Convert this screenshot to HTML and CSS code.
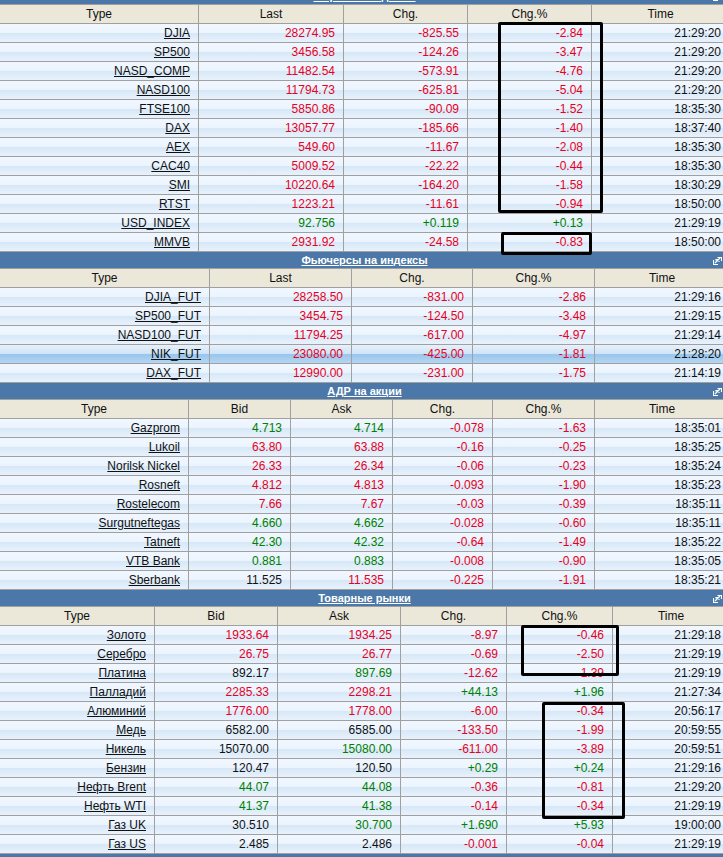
FILE: index.html
```html
<!DOCTYPE html>
<html lang="ru">
<head>
<meta charset="utf-8">
<title>Markets</title>
<link rel="stylesheet" href="styles.css">
</head>
<body>
<div class="board">
  <section class="block">
    <h2 class="band"><a href="#">Мировые индексы</a><svg class="expand" viewBox="0 0 9 8"><path d="M0.5 3v4.5H5M2 6l5-5M4.5 0.5H8.5V4M5 2.500h-2v1M6 5v-1" fill="none" stroke="#fff" stroke-width="1.200"/></svg></h2>
    <table class="grid g1">
      <colgroup><col><col><col><col><col><col></colgroup>
      <thead><tr><th>Type</th><th>Last</th><th>Chg.</th><th>Chg.%</th><th>Time</th></tr></thead>
      <tbody>
        <tr><td><a href="#">DJIA</a></td><td class="r">28274.95</td><td class="r">-825.55</td><td class="r">-2.84</td><td>21:29:20</td></tr>
        <tr><td><a href="#">SP500</a></td><td class="r">3456.58</td><td class="r">-124.26</td><td class="r">-3.47</td><td>21:29:20</td></tr>
        <tr><td><a href="#">NASD_COMP</a></td><td class="r">11482.54</td><td class="r">-573.91</td><td class="r">-4.76</td><td>21:29:20</td></tr>
        <tr><td><a href="#">NASD100</a></td><td class="r">11794.73</td><td class="r">-625.81</td><td class="r">-5.04</td><td>21:29:20</td></tr>
        <tr><td><a href="#">FTSE100</a></td><td class="r">5850.86</td><td class="r">-90.09</td><td class="r">-1.52</td><td>18:35:30</td></tr>
        <tr><td><a href="#">DAX</a></td><td class="r">13057.77</td><td class="r">-185.66</td><td class="r">-1.40</td><td>18:37:40</td></tr>
        <tr><td><a href="#">AEX</a></td><td class="r">549.60</td><td class="r">-11.67</td><td class="r">-2.08</td><td>18:35:30</td></tr>
        <tr><td><a href="#">CAC40</a></td><td class="r">5009.52</td><td class="r">-22.22</td><td class="r">-0.44</td><td>18:35:30</td></tr>
        <tr><td><a href="#">SMI</a></td><td class="r">10220.64</td><td class="r">-164.20</td><td class="r">-1.58</td><td>18:30:29</td></tr>
        <tr><td><a href="#">RTST</a></td><td class="r">1223.21</td><td class="r">-11.61</td><td class="r">-0.94</td><td>18:50:00</td></tr>
        <tr><td><a href="#">USD_INDEX</a></td><td class="g">92.756</td><td class="g">+0.119</td><td class="g">+0.13</td><td>21:29:19</td></tr>
        <tr><td><a href="#">MMVB</a></td><td class="r">2931.92</td><td class="r">-24.58</td><td class="r">-0.83</td><td>18:50:00</td></tr>
      </tbody>
    </table>
  </section>
  <section class="block">
    <h2 class="band"><a href="#">Фьючерсы на индексы</a><svg class="expand" viewBox="0 0 9 8"><path d="M0.5 3v4.5H5M2 6l5-5M4.5 0.5H8.5V4M5 2.500h-2v1M6 5v-1" fill="none" stroke="#fff" stroke-width="1.200"/></svg></h2>
    <table class="grid g2">
      <colgroup><col><col><col><col><col><col></colgroup>
      <thead><tr><th>Type</th><th>Last</th><th>Chg.</th><th>Chg.%</th><th>Time</th></tr></thead>
      <tbody>
        <tr><td><a href="#">DJIA_FUT</a></td><td class="r">28258.50</td><td class="r">-831.00</td><td class="r">-2.86</td><td>21:29:16</td></tr>
        <tr><td><a href="#">SP500_FUT</a></td><td class="r">3454.75</td><td class="r">-124.50</td><td class="r">-3.48</td><td>21:29:15</td></tr>
        <tr><td><a href="#">NASD100_FUT</a></td><td class="r">11794.25</td><td class="r">-617.00</td><td class="r">-4.97</td><td>21:29:14</td></tr>
        <tr class="hover"><td><a href="#">NIK_FUT</a></td><td class="r">23080.00</td><td class="r">-425.00</td><td class="r">-1.81</td><td>21:28:20</td></tr>
        <tr><td><a href="#">DAX_FUT</a></td><td class="r">12990.00</td><td class="r">-231.00</td><td class="r">-1.75</td><td>21:14:19</td></tr>
      </tbody>
    </table>
  </section>
  <section class="block">
    <h2 class="band"><a href="#">АДР на акции</a><svg class="expand" viewBox="0 0 9 8"><path d="M0.5 3v4.5H5M2 6l5-5M4.5 0.5H8.5V4M5 2.500h-2v1M6 5v-1" fill="none" stroke="#fff" stroke-width="1.200"/></svg></h2>
    <table class="grid g3">
      <colgroup><col><col><col><col><col><col></colgroup>
      <thead><tr><th>Type</th><th>Bid</th><th>Ask</th><th>Chg.</th><th>Chg.%</th><th>Time</th></tr></thead>
      <tbody>
        <tr><td><a href="#">Gazprom</a></td><td class="g">4.713</td><td class="g">4.714</td><td class="r">-0.078</td><td class="r">-1.63</td><td>18:35:01</td></tr>
        <tr><td><a href="#">Lukoil</a></td><td class="r">63.80</td><td class="r">63.88</td><td class="r">-0.16</td><td class="r">-0.25</td><td>18:35:25</td></tr>
        <tr><td><a href="#">Norilsk Nickel</a></td><td class="r">26.33</td><td class="r">26.34</td><td class="r">-0.06</td><td class="r">-0.23</td><td>18:35:24</td></tr>
        <tr><td><a href="#">Rosneft</a></td><td class="r">4.812</td><td class="r">4.813</td><td class="r">-0.093</td><td class="r">-1.90</td><td>18:35:23</td></tr>
        <tr><td><a href="#">Rostelecom</a></td><td class="r">7.66</td><td class="r">7.67</td><td class="r">-0.03</td><td class="r">-0.39</td><td>18:35:11</td></tr>
        <tr><td><a href="#">Surgutneftegas</a></td><td class="g">4.660</td><td class="g">4.662</td><td class="r">-0.028</td><td class="r">-0.60</td><td>18:35:11</td></tr>
        <tr><td><a href="#">Tatneft</a></td><td class="g">42.30</td><td class="g">42.32</td><td class="r">-0.64</td><td class="r">-1.49</td><td>18:35:22</td></tr>
        <tr><td><a href="#">VTB Bank</a></td><td class="g">0.881</td><td class="g">0.883</td><td class="r">-0.008</td><td class="r">-0.90</td><td>18:35:05</td></tr>
        <tr><td><a href="#">Sberbank</a></td><td>11.525</td><td class="r">11.535</td><td class="r">-0.225</td><td class="r">-1.91</td><td>18:35:21</td></tr>
      </tbody>
    </table>
  </section>
  <section class="block">
    <h2 class="band"><a href="#">Товарные рынки</a><svg class="expand" viewBox="0 0 9 8"><path d="M0.5 3v4.5H5M2 6l5-5M4.5 0.5H8.5V4M5 2.500h-2v1M6 5v-1" fill="none" stroke="#fff" stroke-width="1.200"/></svg></h2>
    <table class="grid g4">
      <colgroup><col><col><col><col><col><col></colgroup>
      <thead><tr><th>Type</th><th>Bid</th><th>Ask</th><th>Chg.</th><th>Chg.%</th><th>Time</th></tr></thead>
      <tbody>
        <tr><td><a href="#">Золото</a></td><td class="r">1933.64</td><td class="r">1934.25</td><td class="r">-8.97</td><td class="r">-0.46</td><td>21:29:18</td></tr>
        <tr><td><a href="#">Серебро</a></td><td class="r">26.75</td><td class="r">26.77</td><td class="r">-0.69</td><td class="r">-2.50</td><td>21:29:19</td></tr>
        <tr><td><a href="#">Платина</a></td><td>892.17</td><td class="g">897.69</td><td class="r">-12.62</td><td class="r">-1.39</td><td>21:29:19</td></tr>
        <tr><td><a href="#">Палладий</a></td><td class="r">2285.33</td><td class="r">2298.21</td><td class="g">+44.13</td><td class="g">+1.96</td><td>21:27:34</td></tr>
        <tr><td><a href="#">Алюминий</a></td><td class="r">1776.00</td><td class="r">1778.00</td><td class="r">-6.00</td><td class="r">-0.34</td><td>20:56:17</td></tr>
        <tr><td><a href="#">Медь</a></td><td>6582.00</td><td>6585.00</td><td class="r">-133.50</td><td class="r">-1.99</td><td>20:59:55</td></tr>
        <tr><td><a href="#">Никель</a></td><td>15070.00</td><td class="g">15080.00</td><td class="r">-611.00</td><td class="r">-3.89</td><td>20:59:51</td></tr>
        <tr><td><a href="#">Бензин</a></td><td>120.47</td><td>120.50</td><td class="g">+0.29</td><td class="g">+0.24</td><td>21:29:16</td></tr>
        <tr><td><a href="#">Нефть Brent</a></td><td class="g">44.07</td><td class="g">44.08</td><td class="r">-0.36</td><td class="r">-0.81</td><td>21:29:20</td></tr>
        <tr><td><a href="#">Нефть WTI</a></td><td class="g">41.37</td><td class="g">41.38</td><td class="r">-0.14</td><td class="r">-0.34</td><td>21:29:19</td></tr>
        <tr><td><a href="#">Газ UK</a></td><td>30.510</td><td class="g">30.700</td><td class="g">+1.690</td><td class="g">+5.93</td><td>19:00:00</td></tr>
        <tr><td><a href="#">Газ US</a></td><td>2.485</td><td>2.486</td><td class="r">-0.001</td><td class="r">-0.04</td><td>21:29:19</td></tr>
      </tbody>
    </table>
  </section>
  <div class="band"></div>
  <div class="mark m1"></div>
  <div class="mark m2"></div>
  <div class="mark m3"></div>
  <div class="mark m4"></div>
</div>
</body>
</html>
```
FILE: styles.css
```css
html, body {
  margin: 0;
  padding: 0;
  height: 857px;
  overflow: hidden;
  background: #fff;
}
.board {
  position: relative;
  width: 729px;
  margin-top: -12px;
  font-family: "Liberation Sans", Arial, sans-serif;
  font-size: 12px;
  color: #111;
}
.band {
  position: relative;
  height: 16px;
  margin: 0;
  background: #4b78a8;
  font-size: 11px;
  line-height: 17px;
  font-weight: bold;
  text-align: center;
}
.band a {
  color: #fff;
}
.expand {
  position: absolute;
  right: 7px;
  top: 5px;
  width: 9px;
  height: 8px;
}
.grid {
  width: 729px;
  table-layout: fixed;
  border-collapse: separate;
  border-spacing: 0;
  border-top: 1px solid #a0a0a0;
}
.grid th, .grid td {
  height: 18px;
  padding: 0 8px 0 0;
  border-right: 1px solid #a0a0a0;
  border-bottom: 1px solid #a0a0a0;
  box-sizing: content-box;
  line-height: 14px;
  white-space: nowrap;
}
.grid th {
  padding: 0;
  background: #ebe8da;
  font-weight: normal;
  text-align: center;
}
.grid td {
  text-align: right;
  background: linear-gradient(#f1f7ff 0, #ebf4fe 50%, #d6e7f7 50%, #e8f2fc 100%);
}
.grid th:last-child, .grid td:last-child {
  border-right: 0;
}
.grid tr.hover td {
  background: linear-gradient(#e6f1fb 0, #cfe3f5 50%, #96c5ee 50%, #b5d6f2 100%);
}
.grid a {
  color: #111;
}
.grid td.r { color: #e8001c; }
.grid td.g { color: #008000; }

.g1 col:nth-child(1) { width: 199px; }
.g1 col:nth-child(2) { width: 145px; }
.g1 col:nth-child(3) { width: 124px; }
.g1 col:nth-child(4) { width: 124px; }
.g1 col:nth-child(5) { width: 137px; }
.g1 col:nth-child(6) { width: 0; }

.g2 col:nth-child(1) { width: 210px; }
.g2 col:nth-child(2) { width: 142px; }
.g2 col:nth-child(3) { width: 121px; }
.g2 col:nth-child(4) { width: 122px; }
.g2 col:nth-child(5) { width: 134px; }
.g2 col:nth-child(6) { width: 0; }

.g3 col:nth-child(1) { width: 189px; }
.g3 col:nth-child(2) { width: 102px; }
.g3 col:nth-child(3) { width: 102px; }
.g3 col:nth-child(4) { width: 100px; }
.g3 col:nth-child(5) { width: 102px; }
.g3 col:nth-child(6) { width: 134px; }

.g4 col:nth-child(1) { width: 155px; }
.g4 col:nth-child(2) { width: 123px; }
.g4 col:nth-child(3) { width: 123px; }
.g4 col:nth-child(4) { width: 106px; }
.g4 col:nth-child(5) { width: 106px; }
.g4 col:nth-child(6) { width: 116px; }

.mark {
  position: absolute;
  box-sizing: border-box;
  border: 3px solid #000;
  border-radius: 2px;
}
.m1 { left: 498px; top: 34px; width: 105px; height: 191px; }
.m2 { left: 501px; top: 244px; width: 91px; height: 23px; }
.m3 { left: 521px; top: 637px; width: 98px; height: 51px; }
.m4 { left: 542px; top: 714px; width: 83px; height: 117px; }
```
